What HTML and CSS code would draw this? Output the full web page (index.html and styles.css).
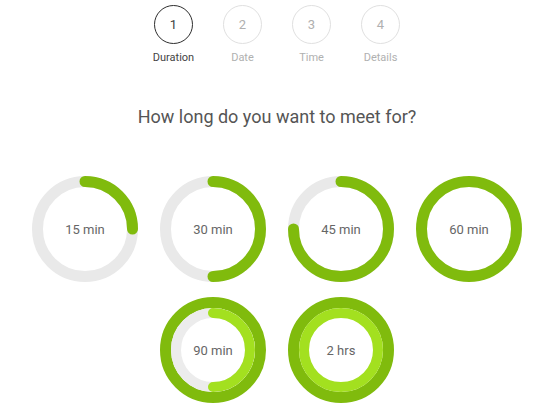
FILE: index.html
```html
<!DOCTYPE html>
<html>
<head>
<meta charset="utf-8">
<link rel="stylesheet" href="styles.css">
</head>
<body>
<div class="page">
  <ol class="steps">
    <li class="step active"><span class="step-num">1</span><span class="step-label">Duration</span></li>
    <li class="step"><span class="step-num">2</span><span class="step-label">Date</span></li>
    <li class="step"><span class="step-num">3</span><span class="step-label">Time</span></li>
    <li class="step"><span class="step-num">4</span><span class="step-label">Details</span></li>
  </ol>

  <h1 class="title">How long do you want to meet for?</h1>

  <div class="options">
    <div class="option">
      <svg class="ring" viewBox="0 0 106 106">
        <circle class="track" cx="53" cy="53" r="47.5"/>
        <circle class="arc p25" cx="53" cy="53" r="47.5" pathLength="100" transform="rotate(-90 53 53)"/>
      </svg>
      <span class="option-label">15 min</span>
    </div>
    <div class="option">
      <svg class="ring" viewBox="0 0 106 106">
        <circle class="track" cx="53" cy="53" r="47.5"/>
        <circle class="arc p50" cx="53" cy="53" r="47.5" pathLength="100" transform="rotate(-90 53 53)"/>
      </svg>
      <span class="option-label">30 min</span>
    </div>
    <div class="option">
      <svg class="ring" viewBox="0 0 106 106">
        <circle class="track" cx="53" cy="53" r="47.5"/>
        <circle class="arc p75" cx="53" cy="53" r="47.5" pathLength="100" transform="rotate(-90 53 53)"/>
      </svg>
      <span class="option-label">45 min</span>
    </div>
    <div class="option">
      <svg class="ring" viewBox="0 0 106 106">
        <circle class="full" cx="53" cy="53" r="47.5"/>
      </svg>
      <span class="option-label">60 min</span>
    </div>
    <div class="option">
      <svg class="ring" viewBox="0 0 106 106">
        <circle class="full" cx="53" cy="53" r="47.5"/>
        <circle class="inner-track" cx="53" cy="53" r="37"/>
        <circle class="inner-arc p50" cx="53" cy="53" r="37" pathLength="100" transform="rotate(-90 53 53)"/>
      </svg>
      <span class="option-label">90 min</span>
    </div>
    <div class="option">
      <svg class="ring" viewBox="0 0 106 106">
        <circle class="full" cx="53" cy="53" r="47.5"/>
        <circle class="inner-full" cx="53" cy="53" r="37"/>
      </svg>
      <span class="option-label">2 hrs</span>
    </div>
  </div>
</div>
</body>
</html>
```

FILE: styles.css
```css
html, body {
  margin: 0;
  padding: 0;
  background: #ffffff;
}

body {
  font-family: Roboto, "Liberation Sans", Arial, sans-serif;
  color: #555;
}

.page {
  display: flex;
  flex-direction: column;
  align-items: center;
  padding: 5px 5px 0 0;
}

.steps {
  list-style: none;
  margin: 0;
  padding: 0;
  display: flex;
}

.step {
  width: 69px;
  display: flex;
  flex-direction: column;
  align-items: center;
  gap: 7px;
}

.step-num {
  box-sizing: border-box;
  width: 39px;
  height: 39px;
  border-radius: 50%;
  border: 1.5px solid #e0e0e0;
  display: flex;
  align-items: center;
  justify-content: center;
  font-size: 13px;
  color: #b0b0b0;
}

.step-label {
  font-size: 11px;
  line-height: 14px;
  color: #b0b0b0;
}

.step.active .step-num {
  border-color: #2e2e2e;
  color: #444;
}

.step.active .step-label {
  color: #444;
}

.title {
  margin: 41px 0 0 0;
  font-size: 18px;
  font-weight: 400;
  line-height: 21px;
  color: #555;
}

.options {
  width: 490px;
  margin-top: 49px;
  display: flex;
  flex-wrap: wrap;
  justify-content: center;
  column-gap: 22px;
  row-gap: 15px;
}

.option {
  width: 106px;
  height: 106px;
  display: grid;
  place-items: center;
}

.option > * {
  grid-area: 1 / 1;
}

.ring {
  width: 106px;
  height: 106px;
  display: block;
}

.option-label {
  font-size: 13px;
  color: #666;
}

.track {
  fill: none;
  stroke: #e9e9e9;
  stroke-width: 11;
}

.arc {
  fill: none;
  stroke: #80bb0d;
  stroke-width: 11;
  stroke-linecap: round;
}

.full {
  fill: none;
  stroke: #80bb0d;
  stroke-width: 11;
}

.inner-track {
  fill: none;
  stroke: #ececec;
  stroke-width: 10;
}

.inner-arc {
  fill: none;
  stroke: #a3e01f;
  stroke-width: 10;
  stroke-linecap: round;
}

.inner-full {
  fill: none;
  stroke: #a3e01f;
  stroke-width: 10;
}

.p25 { stroke-dasharray: 25 100; }
.p50 { stroke-dasharray: 50 100; }
.p75 { stroke-dasharray: 75 100; }
```
